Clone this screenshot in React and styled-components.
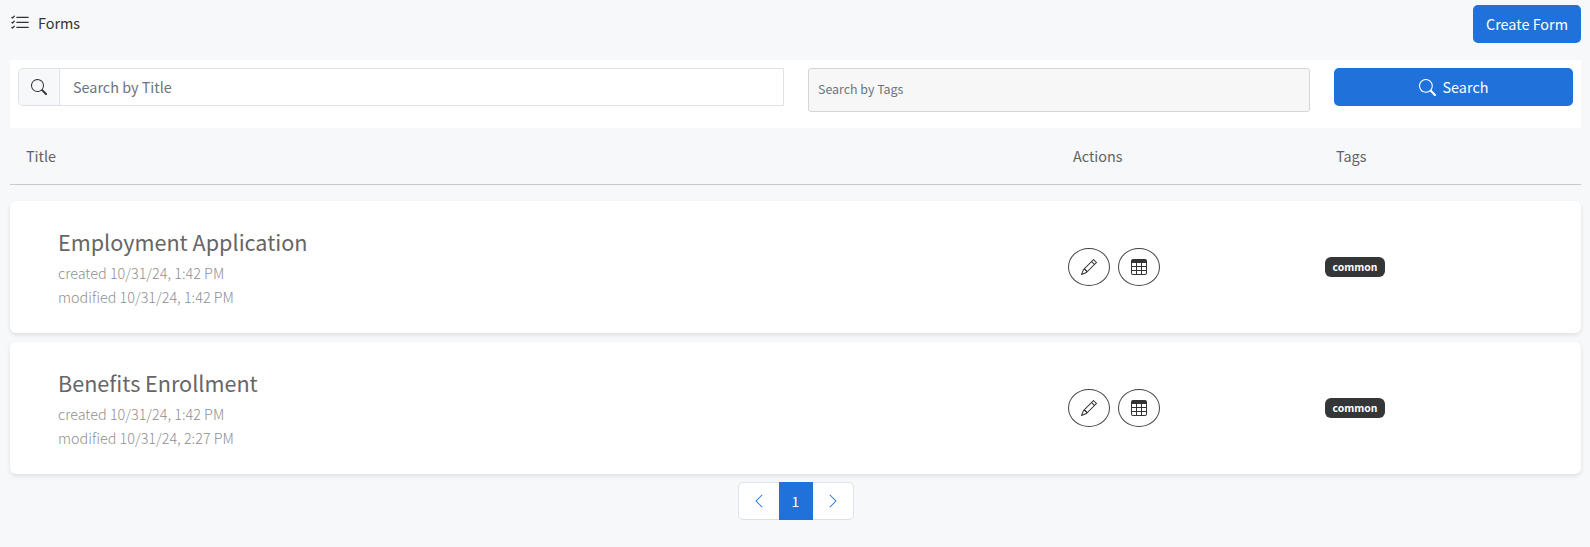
import styled, { createGlobalStyle } from 'styled-components';
import { BsListCheck, BsSearch, BsPencil, BsTable, BsChevronLeft, BsChevronRight } from 'react-icons/bs';

const GlobalStyle = createGlobalStyle`
  html, body {
    margin: 0;
    background-color: #f7f8fa;
  }

  body {
    font-family: "Noto Sans CJK SC", "Noto Sans", sans-serif;
    color: #212529;
  }
`;

const Page = styled.div`
  padding: 5px 9px 27px 10px;
  min-height: 547px;
  box-sizing: border-box;
`;

const TopBar = styled.div`
  display: flex;
  justify-content: space-between;
  align-items: center;
  height: 38px;
  margin-bottom: 17px;
`;

const PageTitle = styled.div`
  display: flex;
  align-items: center;
  gap: 8px;
  padding-bottom: 3px;
  font-size: 14.4px;
  color: #333;

  svg {
    font-size: 20px;
  }
`;

const PrimaryButton = styled.button`
  display: flex;
  align-items: center;
  justify-content: center;
  gap: 7px;
  height: 38px;
  padding: 0 13px 2px;
  border: none;
  border-radius: 5px;
  background-color: #2071d9;
  color: #fff;
  font-family: inherit;
  font-size: 14.4px;

  svg {
    margin-top: 2px;
    font-size: 17px;
  }
`;

const SearchPanel = styled.div`
  display: grid;
  grid-template-columns: 766px 502px 239px;
  column-gap: 24px;
  align-items: start;
  height: 68px;
  padding: 8px;
  box-sizing: border-box;
  background-color: #fff;
`;

const InputGroup = styled.div`
  display: flex;
  height: 38px;
  box-sizing: border-box;
  border: 1px solid #dee2e6;
  border-radius: 5px 0 0 5px;
`;

const InputAddon = styled.div`
  display: flex;
  align-items: center;
  justify-content: center;
  width: 40px;
  background-color: #f7f8fa;
  border-right: 1px solid #dee2e6;
  border-radius: 5px 0 0 5px;
  font-size: 16px;
  color: #333;
`;

const TitleInput = styled.input`
  flex: 1;
  border: none;
  outline: none;
  padding: 0 13px 2px;
  font-family: inherit;
  font-size: 14.4px;

  &::placeholder {
    color: #6c757d;
    opacity: 1;
  }
`;

const TagsInput = styled.input`
  height: 44px;
  box-sizing: border-box;
  border: 1px solid #d6d6d6;
  border-radius: 3px;
  background-color: #f7f7f7;
  padding: 0 9px 3px;
  outline: none;
  font-family: inherit;
  font-size: 12.4px;

  &::placeholder {
    color: #6c757d;
    opacity: 1;
  }
`;

const ListGrid = styled.div`
  display: grid;
  grid-template-columns: 1058px 257px 1fr;
  align-items: center;
`;

const TableHead = styled(ListGrid)`
  height: 57px;
  padding-bottom: 2px;
  box-sizing: border-box;
  margin-bottom: 16px;
  border-bottom: 1px solid #c8cacc;
  font-size: 14.4px;
  color: #5f6368;
`;

const HeadCell = styled.div`
  padding-left: ${(props) => props.$indent}px;
`;

const FormCard = styled(ListGrid)`
  height: 132px;
  margin-bottom: 9px;
  border-radius: 6px;
  background-color: #fff;
  box-shadow: 0 2px 4px rgba(0, 0, 0, 0.1);

  &:last-of-type {
    margin-bottom: 8px;
  }
`;

const CardInfo = styled.div`
  padding: 3px 0 0 48px;
`;

const CardTitle = styled.div`
  margin-bottom: 5px;
  font-size: 21.6px;
  line-height: 28px;
  color: #666;
`;

const CardMeta = styled.div`
  font-size: 14.4px;
  font-weight: 300;
  line-height: 24px;
  color: #8f8f8f;
`;

const Actions = styled.div`
  display: flex;
  gap: 8px;
`;

const RoundButton = styled.button`
  display: flex;
  align-items: center;
  justify-content: center;
  width: 42px;
  height: 38px;
  padding: 0;
  border: 1px solid #444;
  border-radius: 50%;
  background: transparent;
  color: #333;
  font-size: 16px;
`;

const TagCell = styled.div`
  display: flex;
`;

const Tag = styled.span`
  display: block;
  padding: 0 7.5px;
  height: 20px;
  line-height: 20px;
  border-radius: 6px;
  background-color: #343638;
  color: #fff;
  font-size: 10.4px;
  font-weight: 700;
`;

const Pagination = styled.nav`
  display: flex;
  justify-content: center;
`;

const PagerList = styled.div`
  display: flex;
  height: 38px;
  box-sizing: border-box;
  border: 1px solid #dee2e6;
  border-radius: 5px;
  background-color: #fff;
`;

const PagerItem = styled.div`
  display: flex;
  align-items: center;
  justify-content: center;
  width: ${(props) => (props.$active ? 34 : 40)}px;
  margin: ${(props) => (props.$active ? '-1px 0' : 0)};
  background-color: ${(props) => (props.$active ? '#2071d9' : 'transparent')};
  color: ${(props) => (props.$active ? '#fff' : '#2071d9')};
  font-size: ${(props) => (props.$active ? 14 : 16)}px;
`;

const forms = [
  { title: 'Employment Application', created: '10/31/24, 1:42 PM', modified: '10/31/24, 1:42 PM', tag: 'common' },
  { title: 'Benefits Enrollment', created: '10/31/24, 1:42 PM', modified: '10/31/24, 2:27 PM', tag: 'common' },
];

const App = () => (
  <Page>
    <GlobalStyle />
    <TopBar>
      <PageTitle>
        <BsListCheck />
        Forms
      </PageTitle>
      <PrimaryButton>Create Form</PrimaryButton>
    </TopBar>
    <SearchPanel>
      <InputGroup>
        <InputAddon>
          <BsSearch />
        </InputAddon>
        <TitleInput placeholder="Search by Title" />
      </InputGroup>
      <TagsInput placeholder="Search by Tags" />
      <PrimaryButton>
        <BsSearch />
        Search
      </PrimaryButton>
    </SearchPanel>
    <TableHead>
      <HeadCell $indent={16}>Title</HeadCell>
      <HeadCell $indent={5}>Actions</HeadCell>
      <HeadCell $indent={11}>Tags</HeadCell>
    </TableHead>
    {forms.map((form) => (
      <FormCard key={form.title}>
        <CardInfo>
          <CardTitle>{form.title}</CardTitle>
          <CardMeta>created {form.created}</CardMeta>
          <CardMeta>modified {form.modified}</CardMeta>
        </CardInfo>
        <Actions>
          <RoundButton aria-label="Edit">
            <BsPencil />
          </RoundButton>
          <RoundButton aria-label="Results">
            <BsTable />
          </RoundButton>
        </Actions>
        <TagCell>
          <Tag>{form.tag}</Tag>
        </TagCell>
      </FormCard>
    ))}
    <Pagination>
      <PagerList>
        <PagerItem>
          <BsChevronLeft />
        </PagerItem>
        <PagerItem $active>1</PagerItem>
        <PagerItem>
          <BsChevronRight />
        </PagerItem>
      </PagerList>
    </Pagination>
  </Page>
);

export default App;
